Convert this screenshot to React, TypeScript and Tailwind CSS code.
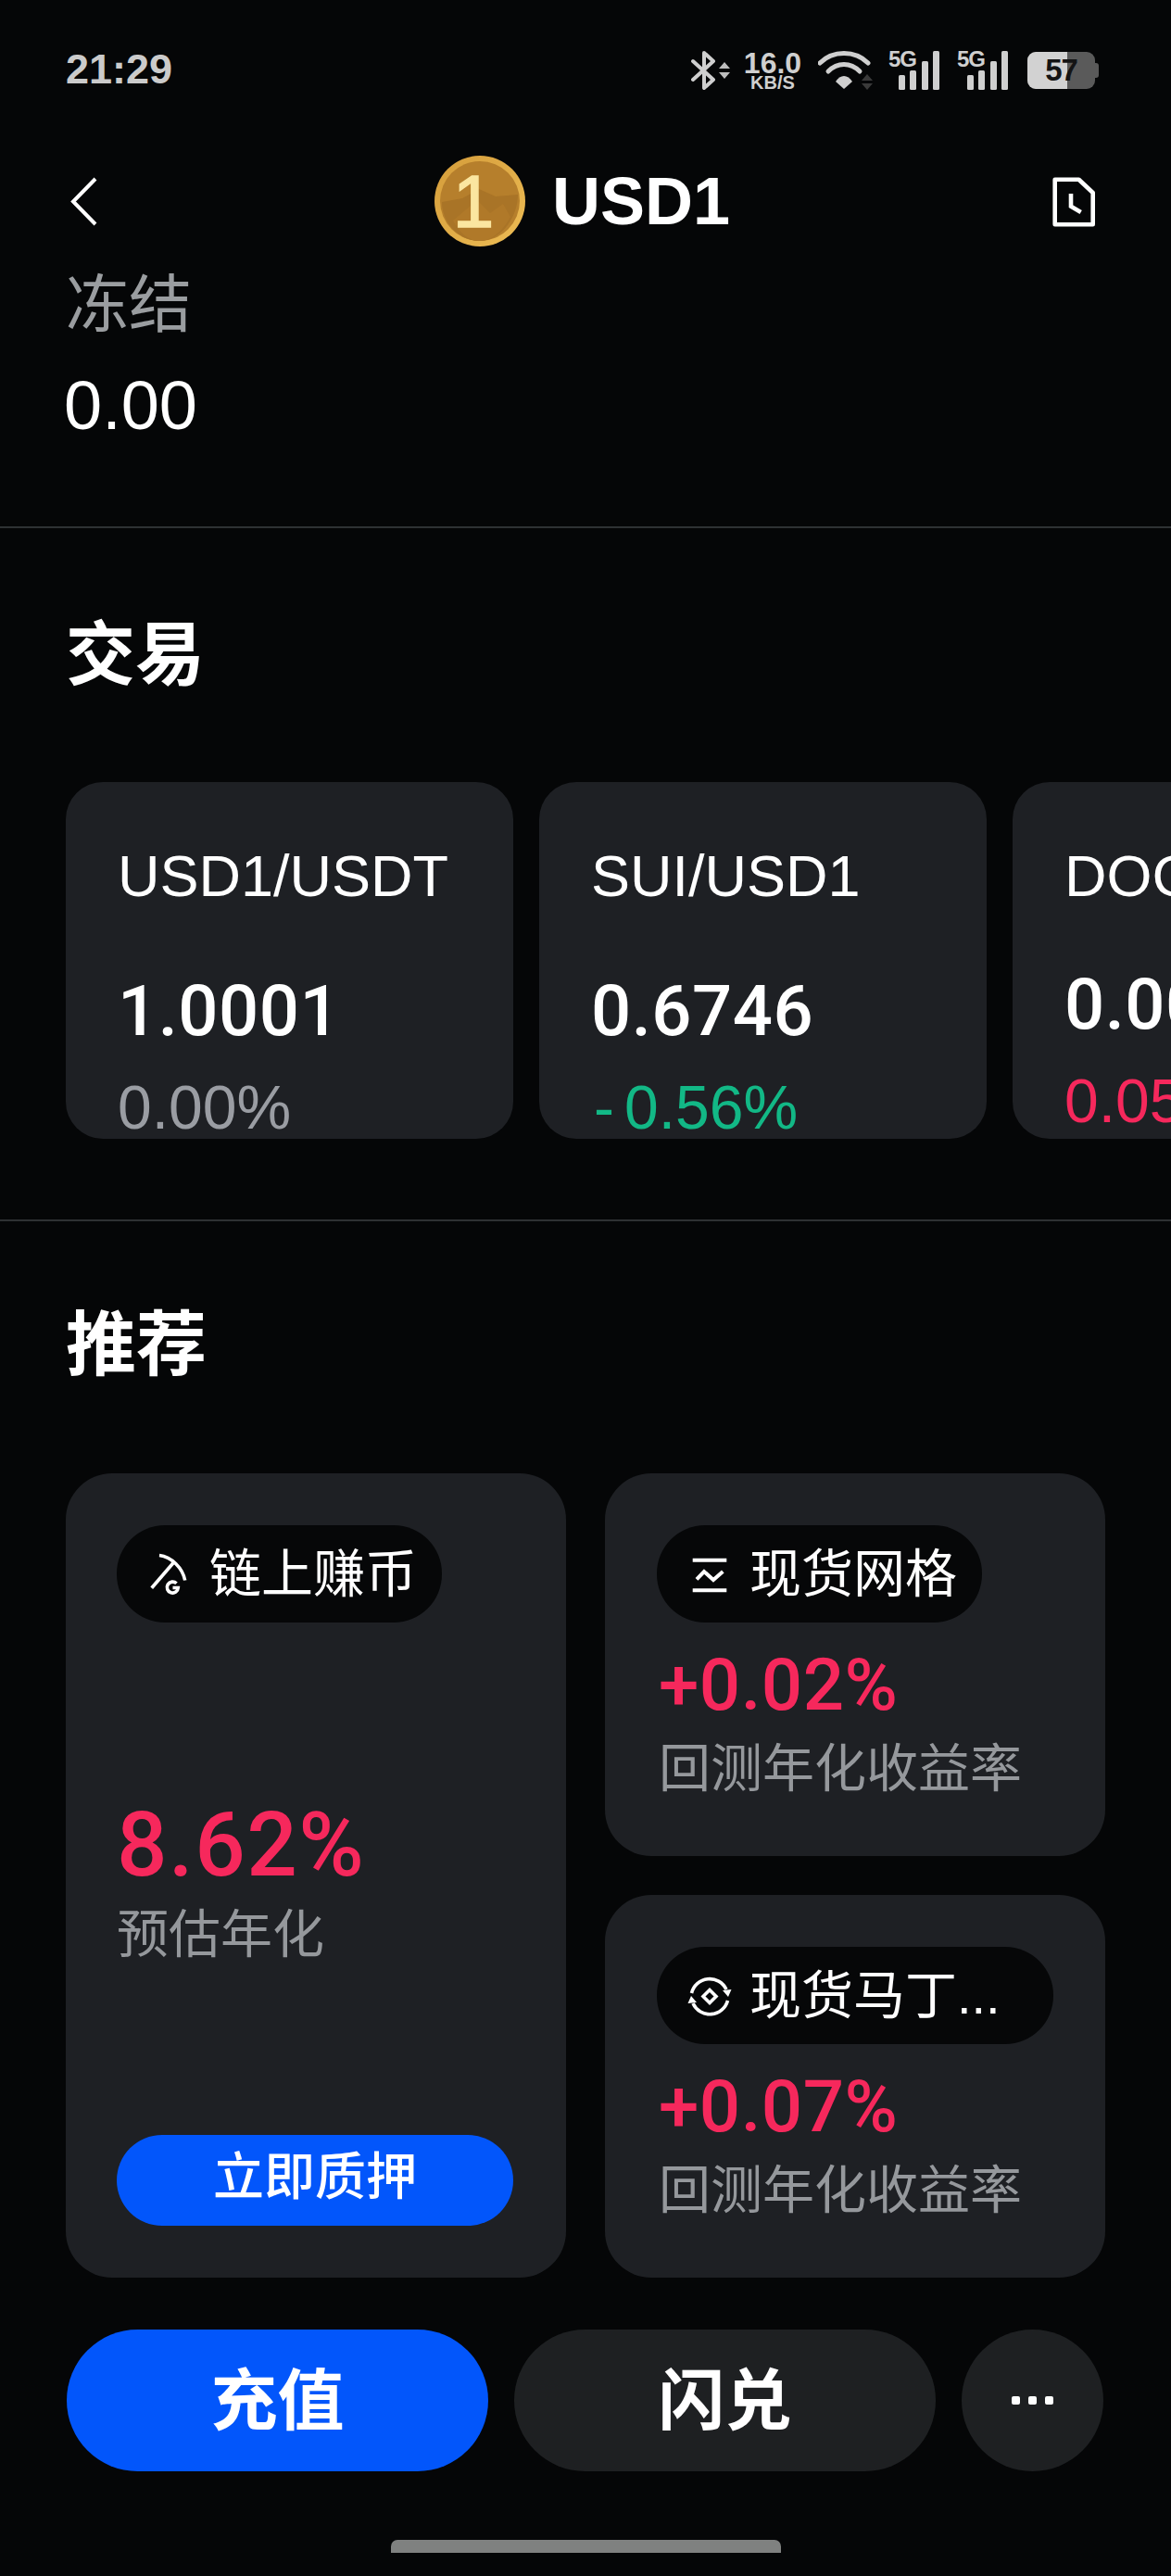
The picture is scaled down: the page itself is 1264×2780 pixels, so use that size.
import React from "react";

function Bluetooth() {
  return (
    <svg width="42" height="42" viewBox="0 0 42 42" fill="none">
      <path d="M2 11 L24 31 L14 40 L14 2 L24 11 L2 31" stroke="#cfcfcf" strokeWidth="4" strokeLinejoin="round" strokeLinecap="round" />
      <path d="M30 19 L36 12 L42 19 Z M30 23 L36 30 L42 23 Z" fill="#bdbdbd" />
    </svg>
  );
}

function Wifi() {
  return (
    <svg width="59" height="42" viewBox="0 0 59 42" fill="none">
      <path d="M2 13 C16 -1 40 -1 54 13" stroke="#cfcfcf" strokeWidth="5" strokeLinecap="round" />
      <path d="M11 22 C21 12 35 12 45 22" stroke="#cfcfcf" strokeWidth="5" strokeLinecap="round" />
      <path d="M19 33 C24 25 32 25 37 33 L28 41 Z" fill="#cfcfcf" />
      <path d="M47 32 L53 25 L59 32 Z M47 35 L53 42 L59 35 Z" fill="#3a3a3a" />
    </svg>
  );
}

function Signal() {
  const bars = [
    { x: 11, h: 16 },
    { x: 23, h: 21 },
    { x: 36, h: 31 },
    { x: 48, h: 42 },
  ];
  return (
    <div className="relative w-[55px] h-[42px]">
      <span className="absolute left-0 top-[-3px] text-[24px] leading-[24px] font-bold text-[#cfcfcf] tracking-[-1px]">5G</span>
      <svg className="absolute left-0 top-0" width="55" height="42" viewBox="0 0 55 42">
        {bars.map((b) => (
          <rect key={b.x} x={b.x} y={42 - b.h} width="7" height={b.h} rx="1.5" fill="#cfcfcf" />
        ))}
      </svg>
    </div>
  );
}

function Battery() {
  return (
    <div className="flex items-center w-[77px]">
      <div className="relative w-[73px] h-[40px] rounded-[9px] overflow-hidden bg-[#5a5a5a]">
        <div className="absolute left-0 top-0 bottom-0 w-[43px] bg-[#d2d2d2]" />
        <span className="absolute inset-0 flex items-center justify-center text-[33px] leading-[40px] font-bold text-[#141414] tracking-[-1px]">57</span>
      </div>
      <div className="w-[4px] h-[16px] rounded-r-[3px] bg-[#5a5a5a]" />
    </div>
  );
}

function Coin() {
  return (
    <svg width="98" height="98" viewBox="0 0 98 98">
      <defs>
        <linearGradient id="coinRing" x1="0" y1="0" x2="1" y2="1">
          <stop offset="0" stopColor="#d49c3a" />
          <stop offset="1" stopColor="#eebd55" />
        </linearGradient>
      </defs>
      <circle cx="49" cy="49" r="49" fill="url(#coinRing)" />
      <circle cx="49" cy="49" r="43" fill="#b67f2c" />
      <path d="M8 50 L30 46 L48 36 L66 44 L90 42 C90 66 72 92 49 92 C26 92 8 72 8 50 Z" fill="#a97427" />
      <path d="M20 70 L46 48 L60 62 L74 52 L82 66 C72 84 60 92 49 92 C36 92 26 82 20 70 Z" fill="#b07929" />
      <text x="42" y="77" textAnchor="middle" fontFamily="Liberation Sans" fontSize="80" fill="#fbe6a0" stroke="#fbe6a0" strokeWidth="1.5">1</text>
    </svg>
  );
}

function Back() {
  return (
    <svg width="29" height="53" viewBox="0 0 29 53" fill="none">
      <path d="M27 2 L3 26.5 L27 51" stroke="#fff" strokeWidth="4" />
    </svg>
  );
}

function FileClock() {
  return (
    <svg width="70" height="75" viewBox="0 0 70 75" fill="none">
      <path d="M13.7 13.7 H39.5 L54.7 28 V62.3 H13.7 Z" stroke="#fff" strokeWidth="4.6" strokeLinejoin="round" />
      <path d="M31 29 V42.7 L41.7 49" stroke="#fff" strokeWidth="4.6" />
    </svg>
  );
}

function PickIcon() {
  return (
    <svg width="60" height="65" viewBox="0 0 60 65" fill="none" stroke="#fff" strokeWidth="3.6">
      <path d="M19 12.5 C32 14 44 26 46.7 39.5" />
      <path d="M10.7 47.7 L34 20.7" />
      <path d="M37.5 42.8 A6 6 0 1 0 39.3 47.5 H33.5" />
    </svg>
  );
}

function GridIcon() {
  return (
    <svg width="60" height="65" viewBox="0 0 60 65" fill="none" stroke="#fff" strokeWidth="4">
      <path d="M11.7 17.7 H48.3 M11.7 50.3 H48.3" />
      <path d="M16 38.3 L24 30 L34 39 L44.3 30" />
    </svg>
  );
}

function SpinIcon() {
  return (
    <svg width="60" height="65" viewBox="0 0 60 65" fill="none" stroke="#fff" strokeWidth="3.6">
      <path d="M10.5 30 A20 20 0 0 1 48 26" />
      <path d="M49.5 38 A20 20 0 0 1 12 41" />
      <path d="M30 26.5 L37 33.5 L30 40.5 L23 33.5 Z" />
      <path d="M44 27 L53.5 26 L50 34 Z M16 40 L6.5 41 L10 33 Z" fill="#fff" stroke="none" />
    </svg>
  );
}

function Pill({ icon, label, width }: { icon: React.ReactNode; label: string; width: string }) {
  return (
    <div className={`flex items-center h-[105px] rounded-[52px] bg-[#060708] pl-[27px] ${width}`}>
      <div className="w-[60px] h-[65px] shrink-0">{icon}</div>
      <span className="ml-[13px] text-[56px] leading-[70px] text-white whitespace-nowrap">{label}</span>
    </div>
  );
}

function Market({
  pair,
  price,
  change,
  color,
  shift,
}: {
  pair: string;
  price: string;
  change: React.ReactNode;
  color: string;
  shift?: boolean;
}) {
  return (
    <div className="w-[483px] h-[385px] shrink-0 rounded-[40px] bg-[#1e2024] pl-[56px] pt-[66px]">
      <div className="text-[63px] leading-[70px] text-white whitespace-nowrap">{pair}</div>
      <div
        className={`font-['Roboto',sans-serif] font-medium text-[76px] leading-[80px] text-white tracking-[0.5px] whitespace-nowrap ${
          shift ? "mt-[64px]" : "mt-[71px]"
        }`}
      >
        {price}
      </div>
      <div className={`text-[66px] leading-[68px] whitespace-nowrap mt-[30px] ${color}`}>{change}</div>
    </div>
  );
}

function Yield({ value }: { value: string }) {
  return (
    <div className="ml-[2px]">
      <div className="mt-[26px] font-['Roboto',sans-serif] font-medium text-[78px] leading-[84px] tracking-[0.5px] text-[#f6285c]">{value}</div>
      <div className="mt-[13px] text-[56px] leading-[70px] text-[#95989c] whitespace-nowrap">回测年化收益率</div>
    </div>
  );
}

export default function App() {
  return (
    <div className="w-[1264px] h-[2780px] overflow-hidden bg-[#050607] font-['Liberation_Sans','Noto_Sans_CJK_SC',sans-serif]">
      {/* status bar */}
      <div className="h-[150px] flex items-center justify-between pl-[71px] pr-[78px]">
        <span className="text-[45px] leading-[50px] font-bold text-[#cbcbcb]">21:29</span>
        <div className="flex items-center h-[42px] mt-[2px]">
          <Bluetooth />
          <div className="ml-[14px] w-[64px] flex flex-col items-center font-bold text-[#cfcfcf]">
            <span className="text-[32px] leading-[26px]">16.0</span>
            <span className="text-[20px] leading-[17px]">KB/S</span>
          </div>
          <div className="ml-[17px]">
            <Wifi />
          </div>
          <div className="ml-[17px]">
            <Signal />
          </div>
          <div className="ml-[19px]">
            <Signal />
          </div>
          <div className="ml-[21px]">
            <Battery />
          </div>
        </div>
      </div>

      {/* header */}
      <div className="h-[134px] grid grid-cols-[393px_auto_1fr] items-center pl-[76px] pr-[69px]">
        <div>
          <Back />
        </div>
        <div className="flex items-center">
          <Coin />
          <span className="ml-[29px] text-[72px] leading-[80px] font-bold text-white">USD1</span>
        </div>
        <div className="flex justify-end">
          <FileClock />
        </div>
      </div>

      {/* frozen balance */}
      <div className="pl-[71px]">
        <div className="h-[84px] pt-[3px] text-[68px] leading-[84px] text-[#9a9da0]">冻结</div>
        <div className="mt-[30px] ml-[-2px] text-[74px] leading-[80px] text-white">0.00</div>
      </div>
      <div className="mt-[90px] h-[2px] bg-[#2e3133]" />

      {/* trade */}
      <div className="pt-[97px] pl-[71px] overflow-hidden">
        <div className="text-[75px] leading-[80px] font-bold text-white">交易</div>
        <div className="mt-[97px] flex gap-[28px]">
          <Market pair="USD1/USDT" price="1.0001" change="0.00%" color="text-[#9a9da3]" />
          <Market
            pair="SUI/USD1"
            price="0.6746"
            change={
              <>
                <span className="ml-[3px] tracking-[11px]">-</span>0.56%
              </>
            }
            color="text-[#12b886]"
          />
          <Market pair="DOGE/USD1" price="0.0000" change="0.05%" color="text-[#f6285c]" shift />
        </div>
      </div>
      <div className="mt-[87px] h-[2px] bg-[#2e3133]" />

      {/* recommended */}
      <div className="pt-[94px] px-[71px]">
        <div className="text-[76px] leading-[80px] font-bold text-white">推荐</div>
        <div className="mt-[98px] h-[868px] flex gap-[42px]">
          <div className="w-[540px] rounded-[50px] bg-[#1e2024] pt-[56px] pb-[56px] pl-[55px] flex flex-col">
            <Pill icon={<PickIcon />} label="链上赚币" width="w-[351px]" />
            <div className="mt-[190px] font-['Roboto',sans-serif] font-medium text-[96px] leading-[100px] tracking-[1.5px] text-[#f6285c]">8.62%</div>
            <div className="mt-[12px] text-[56px] leading-[70px] text-[#95989c]">预估年化</div>
            <div className="mt-auto w-[428px] h-[98px] rounded-[49px] bg-[#0256fb] flex items-center justify-center pb-[8px] text-[55px] leading-[70px] font-medium text-white">
              立即质押
            </div>
          </div>
          <div className="flex-1 flex flex-col gap-[42px]">
            <div className="flex-1 rounded-[50px] bg-[#1e2024] pt-[56px] pl-[56px]">
              <Pill icon={<GridIcon />} label="现货网格" width="w-[351px]" />
              <Yield value="+0.02%" />
            </div>
            <div className="flex-1 rounded-[50px] bg-[#1e2024] pt-[56px] pl-[56px]">
              <Pill icon={<SpinIcon />} label="现货马丁..." width="w-[428px]" />
              <Yield value="+0.07%" />
            </div>
          </div>
        </div>
      </div>

      {/* actions */}
      <div className="mt-[56px] pl-[72px] pr-[72px] flex gap-[28px]">
        <div className="w-[455px] h-[153px] rounded-[77px] bg-[#0256fb] flex items-center justify-center text-[72px] font-bold text-white">充值</div>
        <div className="w-[455px] h-[153px] rounded-[77px] bg-[#1e2022] flex items-center justify-center text-[72px] font-bold text-white">闪兑</div>
        <div className="w-[153px] h-[153px] rounded-full bg-[#1e2022] flex items-center justify-center gap-[9px]">
          <div className="w-[9px] h-[9px] rounded-[2px] bg-white" />
          <div className="w-[9px] h-[9px] rounded-[2px] bg-white" />
          <div className="w-[9px] h-[9px] rounded-[2px] bg-white" />
        </div>
      </div>

      {/* home indicator */}
      <div className="mt-[74px] mx-auto w-[421px] h-[14px] rounded-t-[7px] bg-[#7f8180]" />
    </div>
  );
}
